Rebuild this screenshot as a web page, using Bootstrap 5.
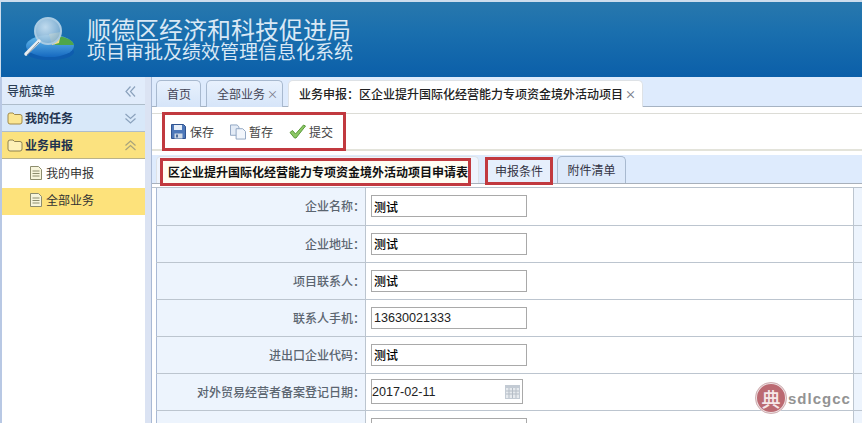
<!DOCTYPE html>
<html lang="zh-CN">
<head>
<meta charset="utf-8">
<title>项目审批及绩效管理信息化系统</title>
<link href="https://cdn.jsdelivr.net/npm/bootstrap@5.3.0/dist/css/bootstrap.min.css" rel="stylesheet">
<style>
html,body{height:426px;overflow:hidden;background:#fff;}
body{font:12px/1.3 "Noto Sans CJK SC","Liberation Sans",sans-serif;color:#333;}
.shell{height:423px;overflow:hidden;position:relative;}
.topbar{height:77px;background:linear-gradient(180deg,#2878ad 0,#1a6fae 40%,#0b5fa9 100%);border-top:2px solid #cddded;border-left:1px solid #cddded;}
.logo-mark{margin-left:22px;margin-top:6px;}
.title-block{margin-left:12px;}
.title-a{font-size:24px;line-height:24px;color:#d9e8f5;margin-top:15px;}
.title-b{font-size:19px;line-height:20px;color:#d9e8f5;}
.workarea{height:346px;}
.sidenav{width:145px;flex:none;border-left:2px solid #b8c8e4;background:#fff;}
.side-head,.side-group{height:27px;display:flex;align-items:center;justify-content:space-between;padding:0 9px 0 5px;font-weight:500;color:#1f3350;border-bottom:1px solid #aebdcb;}
.side-head{background:#e1ecfb;height:28px;padding-top:1px;color:#2c3e55;}
.side-group{background:#d8e8f9;font-weight:700;}
.side-group.is-open{background:#fbe27f;border-bottom-color:#b9b28a;}
.side-label{display:flex;align-items:center;gap:2px;}
.sidenav .list-group{border-radius:0;--bs-list-group-bg:#fff;}
.sidenav .list-group-item{height:27px;padding:0 0 0 28px;border:0;display:flex;align-items:center;gap:4px;color:#333;font-size:12px;margin-bottom:3px;}
.sidenav .list-group-item.active{background:#fde27b;color:#333;padding-bottom:3px;}
.gutter{width:7px;flex:none;background:#dbe3f3;border-right:1px solid #a9b9d4;}
.mainpane{flex:1;min-width:0;background:#fff;}
.tabbar{height:30px;background:#deebfd;border-bottom:1px solid #a6b3c3;padding:3px 0 0 4px;gap:5px;flex-wrap:nowrap;--bs-nav-tabs-border-width:0;}
.tabbar .nav-link{height:27px;padding:0 4px 0 10px;border:1px solid #a8b9cf;border-bottom:0;border-radius:5px 5px 0 0;background:linear-gradient(180deg,#e8f1fd,#d6e5f9);color:#445;font-size:12px;line-height:25px;white-space:nowrap;margin:0;}
.tabbar .tab-plain{padding:0 9px 0 10px;}
.tabbar .nav-link.active{background:#fff;color:#222;font-weight:500;height:27px;padding-right:6px;}
.tab-x{color:#778;margin-left:2px;font-size:11px;}
.toolstrip{margin-top:6px;height:38px;border-top:1px solid #dcdcd6;border-bottom:2px solid #e3e3da;padding-left:10px;}
.redbox{border:3px solid #c1393f;}
.toolgroup{height:39px;margin-top:-2px;width:184px;padding-left:6px;gap:16px;}
.toolbtn{display:flex;align-items:center;gap:3px;color:#444;font-size:12px;background:none;border:0;padding:0;}
.subbar{margin-top:4px;height:29px;background:#deebfd;border-bottom:1px solid #a8b0bb;padding:1px 0 0 4px;flex-wrap:nowrap;--bs-nav-tabs-border-width:0;}
.subbar .nav-link{height:27px;padding:0;border:1px solid #a8b9cf;border-bottom:0;border-radius:5px 5px 0 0;background:#dde9fa;color:#334;font-size:12px;white-space:nowrap;display:flex;margin:0;}
.subbar .nav-link.active{background:#eef4fd;color:#111;font-weight:700;width:323px;padding-left:3px;margin-right:6px;}
.subbar .redbox{height:28px;margin-top:1px;display:flex;align-items:center;background:#fff;}
.subbar .active .redbox{width:311px;padding-left:5px;background:#fffdf3;}
.condition-tab{width:68px;margin-right:4px!important;border:0!important;background:none!important;}
.condition-tab .redbox{width:68px;justify-content:center;background:#e6effc;margin-top:1px;}
.attach-tab{width:69px;justify-content:center;align-items:center;}
.sheetwrap{margin-top:3px;padding-left:4px;border-top:1px solid #b9c2cc;}
.sheetwrap .table{margin:0;table-layout:fixed;width:706px;--bs-table-bg:transparent;border-left:1px solid #a9b9d4;}
.sheetwrap td{height:37px;padding:0;border-bottom:1px solid #bcc5cf;vertical-align:middle;}
.cell-label{width:209px;background:#edf4fd!important;text-align:right;color:#5b6570;border-right:1px solid #bcc5cf;font-weight:500;}
.cell-tail{width:9px;background:#edf4fd!important;border-left:1px solid #bcc5cf;}
.cell-value{padding-left:5px!important;}
.sheetwrap .form-control{width:156px;height:22px;min-height:0;padding:0 2px;border:1px solid #a9a9a9;border-radius:0;font:500 12px "Noto Sans CJK SC","Liberation Sans",sans-serif;color:#000;box-shadow:none;}
.sheetwrap .form-control.num{font:12.6px "Liberation Sans",sans-serif;color:#222;}
.datebox{width:152px;height:25px;border:1px solid #a9a9a9;align-items:center;padding-right:2px;}
.datebox input{flex:1;min-width:0;border:0;outline:0;padding:0;font:12.6px "Liberation Sans",sans-serif;color:#222;background:none;}
.stamp{position:absolute;left:755px;top:382px;display:flex;align-items:center;gap:1px;}
.stamp-seal{width:32px;height:32px;border-radius:50%;background:#bb6a72;border:2px solid #efe2e3;outline:1px solid #cfb0b3;outline-offset:-1px;color:#f6e7e8;display:flex;align-items:center;justify-content:center;font:500 19px "Noto Sans CJK SC",sans-serif;}
.stamp-word{font:700 15px "Liberation Sans",sans-serif;color:#939393;letter-spacing:1px;}
</style>
</head>
<body>
<div class="shell">
  <header class="topbar d-flex">
    <svg class="logo-mark" width="52" height="56" viewBox="0 0 52 56" aria-hidden="true">
      <defs>
        <linearGradient id="discG" x1="0" y1="0" x2="0" y2="1"><stop offset="0" stop-color="#6cc0ee"/><stop offset="1" stop-color="#1569c0"/></linearGradient>
        <radialGradient id="lensG" cx=".4" cy=".35" r=".8"><stop offset="0" stop-color="#d6e9f7"/><stop offset=".7" stop-color="#8fb9d8"/><stop offset="1" stop-color="#6fa1c6"/></radialGradient>
      </defs>
      <ellipse cx="27" cy="44" rx="24" ry="8" fill="#0e5cae"/>
      <ellipse cx="27" cy="38" rx="24" ry="11" fill="url(#discG)"/>
      <path d="M36 28 A24 11 0 0 1 51 37 L32 37Z" fill="#4fa648"/>
      <path d="M26 26 L38 24 L36 35 L29 37Z" fill="#f1dd8a"/>
      <circle cx="25" cy="23" r="13" fill="url(#lensG)" fill-opacity=".88" stroke="#a9cbe3" stroke-width="2"/>
      <path d="M16 33 L3 46" stroke="#e8eef2" stroke-width="3.500" stroke-linecap="round"/>
      <path d="M16 34 L4 47" stroke="#7a8a96" stroke-width="1"/>
    </svg>
    <div class="title-block">
      <div class="title-a">顺德区经济和科技促进局</div>
      <div class="title-b">项目审批及绩效管理信息化系统</div>
    </div>
  </header>

  <div class="workarea d-flex">
    <aside class="sidenav">
      <div class="side-head"><span>导航菜单</span>
        <svg width="11" height="11" viewBox="0 0 11 11" fill="none" stroke="#8ba2bd" stroke-width="1.200" aria-hidden="true"><path d="M5.500 .5 1 5.500l4.500 5M10 .5 5.500 5.500l4.500 5"/></svg>
      </div>
      <div class="side-group">
        <span class="side-label"><svg width="16" height="13" viewBox="0 0 16 13" aria-hidden="true"><path d="M1 3q0-2 2-2h3l1.500 1.500H13q2 0 2 2V10q0 2-2 2H3q-2 0-2-2Z" fill="#fbe692" stroke="#a08a4c"/></svg>我的任务</span>
        <svg width="11" height="11" viewBox="0 0 11 11" fill="none" stroke="#8ba2bd" stroke-width="1.200" aria-hidden="true"><path d="M.5 1 5.500 5.500 10.500 1M.5 5.500 5.500 10l5-4.500"/></svg>
      </div>
      <div class="side-group is-open">
        <span class="side-label"><svg width="16" height="13" viewBox="0 0 16 13" aria-hidden="true"><path d="M1 3q0-2 2-2h3l1.500 1.500H13q2 0 2 2V10q0 2-2 2H3q-2 0-2-2Z" fill="#fdf0b8" stroke="#8f8250"/></svg>业务申报</span>
        <svg width="11" height="11" viewBox="0 0 11 11" fill="none" stroke="#a8a37c" stroke-width="1.200" aria-hidden="true"><path d="M.5 5.500 5.500 1l5 4.500M.5 10 5.500 5.500 10.500 10"/></svg>
      </div>
      <div class="list-group list-group-flush">
        <a class="list-group-item list-group-item-action"><svg width="12" height="14" viewBox="0 0 12 14" aria-hidden="true"><path d="M.5.500h8l3 3v10H.5Z" fill="#f7f5dc" stroke="#8d8d6e"/><path d="M2.500 5h7M2.500 7.500h7M2.500 10h7" stroke="#8d8d6e"/></svg>我的申报</a>
        <a class="list-group-item list-group-item-action active"><svg width="12" height="14" viewBox="0 0 12 14" aria-hidden="true"><path d="M.5.500h8l3 3v10H.5Z" fill="#f7f5dc" stroke="#8d8d6e"/><path d="M2.500 5h7M2.500 7.500h7M2.500 10h7" stroke="#8d8d6e"/></svg>全部业务</a>
      </div>
    </aside>
    <div class="gutter"></div>

    <main class="mainpane">
      <ul class="nav nav-tabs tabbar">
        <li class="nav-item"><a class="nav-link tab-plain">首页</a></li>
        <li class="nav-item"><a class="nav-link">全部业务<span class="tab-x">×</span></a></li>
        <li class="nav-item"><a class="nav-link active">业务申报：区企业提升国际化经营能力专项资金境外活动项目<span class="tab-x">×</span></a></li>
      </ul>

      <div class="toolstrip">
        <div class="redbox toolgroup d-flex align-items-center">
          <button class="toolbtn" type="button"><svg width="16" height="15" viewBox="0 0 16 15" aria-hidden="true"><path d="M.5.500h12l2 2v12H.5Z" fill="#4d77b8" stroke="#2f5390"/><path d="M3 1h8v5H3Z" fill="#e6eef8"/><path d="M3.500 9.500h8v5h-8Z" fill="#cfd8e4"/><path d="M5 10.500h2v3H5Z" fill="#4d6c9c"/></svg>保存</button>
          <button class="toolbtn" type="button"><svg width="16" height="16" viewBox="0 0 17 16" aria-hidden="true"><path d="M.5.500h7l2 2v9H.5Z" fill="#e3ebf6" stroke="#8ea3c0"/><path d="M6.500 4.500h7l3 3v8h-10Z" fill="#f2f6fc" stroke="#8ea3c0"/></svg>暂存</button>
          <button class="toolbtn" type="button"><svg width="17" height="15" viewBox="0 0 17 15" aria-hidden="true"><path d="M1 8.500 3.500 6.500 6.500 10 14.500 1 16.500 2 7 14H5.500Z" fill="#8cc765" stroke="#5a9a3a" stroke-linejoin="round"/></svg>提交</button>
        </div>
      </div>

      <ul class="nav nav-tabs subbar">
        <li class="nav-item"><a class="nav-link active"><span class="redbox">区企业提升国际化经营能力专项资金境外活动项目申请表</span></a></li>
        <li class="nav-item"><a class="nav-link condition-tab"><span class="redbox">申报条件</span></a></li>
        <li class="nav-item"><a class="nav-link attach-tab">附件清单</a></li>
      </ul>

      <div class="sheetwrap">
        <table class="table">
          <colgroup><col style="width:209px"><col><col style="width:9px"></colgroup>
          <tbody>
            <tr><td class="cell-label">企业名称：</td><td class="cell-value"><input class="form-control" value="测试"></td><td class="cell-tail"></td></tr>
            <tr><td class="cell-label">企业地址：</td><td class="cell-value"><input class="form-control" value="测试"></td><td class="cell-tail"></td></tr>
            <tr><td class="cell-label">项目联系人：</td><td class="cell-value"><input class="form-control" value="测试"></td><td class="cell-tail"></td></tr>
            <tr><td class="cell-label">联系人手机：</td><td class="cell-value"><input class="form-control num" value="13630021333"></td><td class="cell-tail"></td></tr>
            <tr><td class="cell-label">进出口企业代码：</td><td class="cell-value"><input class="form-control" value="测试"></td><td class="cell-tail"></td></tr>
            <tr><td class="cell-label">对外贸易经营者备案登记日期：</td><td class="cell-value"><div class="datebox d-flex"><input value="2017-02-11"><svg width="15" height="14" viewBox="0 0 15 14" aria-hidden="true"><path d="M0 0h15v14H0Z" fill="#c3cbd4"/><path d="M1 3h13v10H1Z" fill="#e6eaee"/><path d="M1 6h13M1 9h13M4 3v10M7.500 3v10M11 3v10" stroke="#b5bdc6"/></svg></div></td><td class="cell-tail"></td></tr>
            <tr><td class="cell-label"></td><td class="cell-value"><input class="form-control"></td><td class="cell-tail"></td></tr>
          </tbody>
        </table>
      </div>
    </main>
  </div>

  <div class="stamp">
    <div class="stamp-seal">典</div>
    <div class="stamp-word">sdlcgcc</div>
  </div>
</div>
<script src="https://cdn.jsdelivr.net/npm/bootstrap@5.3.0/dist/js/bootstrap.bundle.min.js"></script>
</body>
</html>
